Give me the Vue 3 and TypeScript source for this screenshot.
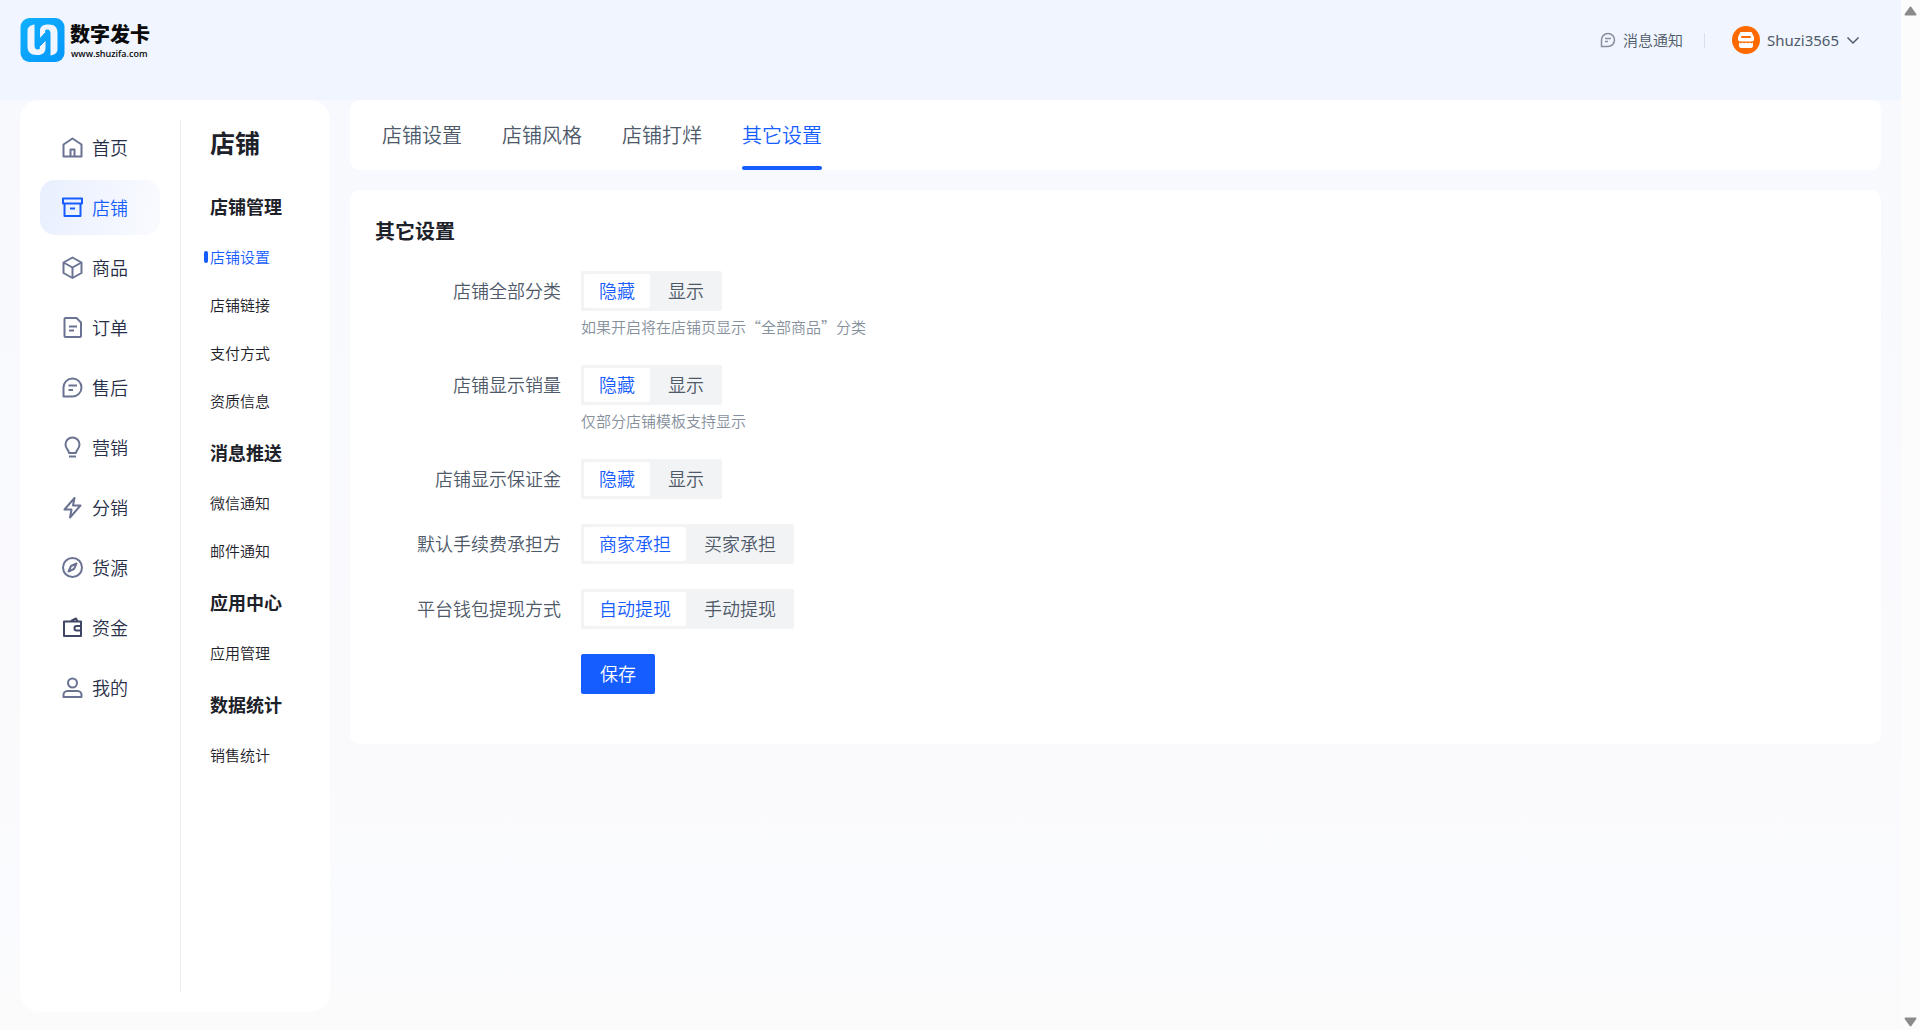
<script setup lang="ts">
import { reactive, ref } from 'vue'

interface MenuItem {
  label: string
  paths: string[]
  dark?: boolean
}

interface Group {
  title: string
  items: string[]
}

interface Field {
  key: string
  label: string
  options: string[]
  hint?: string
}

const menu: MenuItem[] = [
  { label: '首页', paths: ['M3.5 9.5 12.5 3.5l9 6v12h-18z', 'M10.5 21.5v-7h4v7'] },
  { label: '店铺', paths: ['M3 3.5h19v5H3z', 'M4.5 8.5v12.5h16V8.5', 'M10 13.5h5'] },
  { label: '商品', paths: ['M12.5 2.5l9 5v10.5l-9 5-9-5V7.5z', 'M3.5 7.5l9 5 9-5', 'M12.5 12.5V23'] },
  { label: '订单', paths: ['M5.500 3h11l4.500 4.500v13.500a1 1 0 0 1-1 1h-14.500a1 1 0 0 1-1-1v-17a1 1 0 0 1 1-1z', 'M9 11.500h8', 'M9 15.500h5'] },
  { label: '售后', paths: ['M3.500 21.500v-9a9 9 0 1 1 9 9z', 'M8.500 10.500h8.500', 'M8.500 15h4.500'] },
  { label: '营销', paths: ['M9 18c0-3-3.500-4-3.500-8.500a7 7 0 0 1 14 0c0 4.500-3.500 5.500-3.500 8.500z', 'M9 21.500h7'] },
  { label: '分销', paths: ['M14.500 3l-10 11.500h7l-1.500 8 10.500-12h-7.500z'] },
  { label: '货源', paths: ['M12.500 3a9.500 9.500 0 1 1 0 19a9.500 9.500 0 1 1 0-19z', 'M16.500 8.500l-2.500 5.500-5.500 2.500 2.500-5.500z'] },
  { label: '资金', paths: ['M4 6.500h17v14.500h-17z', 'M21 11h-4.500a2 2 0 0 0-2 2v.500a2 2 0 0 0 2 2h4.500', 'M11 6l5-2.500 1.500 3'], dark: true },
  { label: '我的', paths: ['M12.500 3.500a4.500 4.500 0 1 1 0 9a4.500 4.500 0 1 1 0-9z', 'M3.500 22v-2c0-2 1.500-4 4-4h10c2.500 0 4 2 4 4v2z'] },
]

const groups: Group[] = [
  { title: '店铺管理', items: ['店铺设置', '店铺链接', '支付方式', '资质信息'] },
  { title: '消息推送', items: ['微信通知', '邮件通知'] },
  { title: '应用中心', items: ['应用管理'] },
  { title: '数据统计', items: ['销售统计'] },
]

const tabs = ['店铺设置', '店铺风格', '店铺打烊', '其它设置']

const fields: Field[] = [
  { key: 'category', label: '店铺全部分类', options: ['隐藏', '显示'], hint: '如果开启将在店铺页显示“全部商品”分类' },
  { key: 'sales', label: '店铺显示销量', options: ['隐藏', '显示'], hint: '仅部分店铺模板支持显示' },
  { key: 'deposit', label: '店铺显示保证金', options: ['隐藏', '显示'] },
  { key: 'fee', label: '默认手续费承担方', options: ['商家承担', '买家承担'] },
  { key: 'withdraw', label: '平台钱包提现方式', options: ['自动提现', '手动提现'] },
]

const activeMenu = ref('店铺')
const activeSub = ref('店铺设置')
const activeTab = ref('其它设置')
const form = reactive<Record<string, string>>({
  category: '隐藏',
  sales: '隐藏',
  deposit: '隐藏',
  fee: '商家承担',
  withdraw: '自动提现',
})
</script>

<template>
  <div class="shell">
    <div class="page">
      <header class="header">
        <a class="brand" href="#">
          <svg class="brand-mark" viewBox="0 0 44 44" aria-hidden="true">
            <defs>
              <linearGradient id="brand-fill" x1="0" y1="0" x2="1" y2="1">
                <stop offset="0" stop-color="#12b0fd" />
                <stop offset="1" stop-color="#0397fb" />
              </linearGradient>
            </defs>
            <rect width="44" height="44" rx="9" fill="url(#brand-fill)" />
            <path
              d="M7 13c0-4 3-6 7-6.500v20.500c0 3 1 4.500 3 4.500 1.500 0 2.500-.5 2.500-2l-.5-1 6-6v7.500c0 4.500-3 7-8 7h-1c-6 0-9-3-9-8.500z"
              fill="#f0f5ff"
            />
            <path
              d="M37 31c0 4-3 6-7 6.500V16c0-3-1-4.500-3-4.500-1.500 0-2.500.5-2.500 2l.5 1-5.500 6V13c0-4.500 3-6.500 8-6.500h1c6 0 8.500 3 8.500 8.500z"
              fill="#f0f5ff"
            />
            <path d="M19.500 20.500l5.500-6M19 28.500l6-6" stroke="#0aa0fb" stroke-width="1" />
          </svg>
          <span class="brand-text">
            <strong>数字发卡</strong>
            <small>www.shuzifa.com</small>
          </span>
        </a>
        <div class="tools">
          <a class="notice" href="#">
            <svg viewBox="0 0 16 16" class="notice-icon" aria-hidden="true">
              <path d="M1.500 14.500V8A6.500 6.500 0 1 1 8 14.500z" />
              <path d="M5 6.500h6M5 9.500h3" />
            </svg>
            消息通知
          </a>
          <span class="tools-line"></span>
          <button class="user" type="button">
            <svg class="avatar" viewBox="0 0 28 28" aria-hidden="true">
              <circle cx="14" cy="14" r="14" fill="#ff6a00" />
              <path d="M8.500 6h11l2.500 5v2.500a2 2 0 0 1-2 2h-12a2 2 0 0 1-2-2V11z" fill="#fff" />
              <rect x="9" y="10" width="10" height="2" rx="1" fill="#ff6a00" />
              <path d="M7 16.500q1.800 1.500 3.500 0 1.800 1.500 3.500 0 1.800 1.500 3.500 0 1.800 1.500 3.500 0V20a2 2 0 0 1-2 2H9a2 2 0 0 1-2-2z" fill="#fff" />
            </svg>
            <span>Shuzi3565</span>
            <svg class="chevron" viewBox="0 0 14 14" aria-hidden="true"><path d="M1.500 4.500 7 10l5.500-5.500" /></svg>
          </button>
        </div>
      </header>

      <div class="body">
        <aside class="sidebar">
          <nav class="menu">
            <a
              v-for="item in menu"
              :key="item.label"
              href="#"
              class="menu-item"
              :class="{ active: item.label === activeMenu, dark: item.dark }"
              @click.prevent="activeMenu = item.label"
            >
              <svg viewBox="0 0 25 25" aria-hidden="true">
                <path v-for="d in item.paths" :key="d" :d="d" />
              </svg>
              <span>{{ item.label }}</span>
            </a>
          </nav>
          <nav class="submenu">
            <h1>店铺</h1>
            <section v-for="group in groups" :key="group.title">
              <h2>{{ group.title }}</h2>
              <a
                v-for="item in group.items"
                :key="item"
                href="#"
                :class="{ active: item === activeSub }"
                @click.prevent="activeSub = item"
                >{{ item }}</a
              >
            </section>
          </nav>
        </aside>

        <main class="content">
          <nav class="tabs">
            <button
              v-for="tab in tabs"
              :key="tab"
              type="button"
              :class="{ active: tab === activeTab }"
              @click="activeTab = tab"
            >
              {{ tab }}
            </button>
          </nav>
          <form class="panel" @submit.prevent>
            <h2>其它设置</h2>
            <div
              v-for="field in fields"
              :key="field.key"
              class="row"
              role="radiogroup"
              :aria-labelledby="field.key + '-label'"
            >
              <span :id="field.key + '-label'" class="row-label">{{ field.label }}</span>
              <div class="control">
                <div class="segment">
                  <label v-for="option in field.options" :key="option">
                    <input v-model="form[field.key]" type="radio" :name="field.key" :value="option" />
                    <span>{{ option }}</span>
                  </label>
                </div>
                <p v-if="field.hint" class="hint">{{ field.hint }}</p>
              </div>
            </div>
            <div class="row">
              <span class="row-label"></span>
              <button class="save" type="submit">保存</button>
            </div>
          </form>
        </main>
      </div>
    </div>
    <div class="scrollbar" aria-hidden="true">
      <svg viewBox="0 0 13 10"><path d="M6.500 1.500 11.500 8.500h-10z" /></svg>
      <svg viewBox="0 0 13 10"><path d="M1.500 1.500h10L6.500 8.500z" /></svg>
    </div>
  </div>
</template>

<style>
body {
  margin: 0;
}
</style>

<style scoped>
.shell {
  display: flex;
  min-height: 100vh;
  font-family: 'Noto Sans CJK SC', sans-serif;
  font-weight: 350;
  color: #1d2129;
}

.shell *,
.shell *::before {
  box-sizing: border-box;
}

a {
  color: inherit;
  text-decoration: none;
}

button {
  padding: 0;
  border: 0;
  background: none;
  font: inherit;
  color: inherit;
  cursor: pointer;
}

h1,
h2,
p {
  margin: 0;
}

svg {
  display: block;
  flex: none;
}

.page {
  display: flex;
  flex: 1;
  flex-direction: column;
  min-width: 0;
  background: linear-gradient(#f7f9fe, #fafafd 70%, #fafbfe 90%, #fbfbfb);
}

.header {
  display: flex;
  align-items: center;
  justify-content: space-between;
  height: 100px;
  padding: 0 41px 20px 20px;
  background: #f0f5ff;
}

.brand {
  display: flex;
  align-items: center;
  gap: 5px;
  color: #0b0b0b;
}

.brand-mark {
  width: 45px;
  height: 44px;
}

.brand-text {
  display: flex;
  flex-direction: column;
}

.brand-text strong {
  font-size: 20px;
  font-weight: 900;
  line-height: 26px;
}

.brand-text small {
  padding: 1px 0 0 1px;
  font-family: 'Open Sans', sans-serif;
  font-size: 9px;
  font-weight: 600;
  line-height: 12px;
}

.tools {
  display: flex;
  align-items: center;
  font-size: 15px;
  line-height: 24px;
  color: #4e5969;
}

.notice {
  display: flex;
  align-items: center;
  gap: 7px;
}

.notice-icon {
  width: 16px;
  height: 16px;
  fill: none;
  stroke: #86909c;
  stroke-width: 1.5;
}

.tools-line {
  width: 1px;
  height: 15px;
  margin: 0 27px 0 21px;
  background: #dcdfe8;
}

.user {
  display: flex;
  align-items: center;
  gap: 7px;
  font-family: 'Noto Sans', sans-serif;
  font-weight: 400;
}

.avatar {
  width: 28px;
  height: 28px;
}

.chevron {
  width: 14px;
  height: 14px;
  fill: none;
  stroke: #4e5969;
  stroke-width: 1.5;
}

.body {
  display: flex;
  flex: 1;
  gap: 20px;
  padding: 0 20px 18px;
}

.sidebar {
  display: flex;
  flex: none;
  width: 310px;
  padding: 20px 0;
  border-radius: 20px;
  background: #fff;
}

.menu {
  display: flex;
  flex-direction: column;
  gap: 5px;
  width: 161px;
  padding: 0 20px;
  border-right: 1px solid #ececec;
}

.menu-item {
  display: flex;
  align-items: center;
  gap: 7px;
  height: 55px;
  padding-left: 20px;
  border-radius: 15px;
  font-size: 18px;
  color: #272e48;
}

.menu-item span {
  padding-bottom: 2px;
}

.menu-item svg {
  width: 25px;
  height: 25px;
  fill: none;
  stroke: #6b7392;
  stroke-width: 2;
  stroke-linejoin: round;
}

.menu-item.dark svg {
  stroke: #404764;
}

.menu-item.active {
  background: linear-gradient(100deg, #e8effe, #fafbff);
  color: #165dff;
}

.menu-item.active svg {
  stroke: #165dff;
}

.submenu {
  padding-left: 23px;
}

.submenu h1 {
  margin-bottom: 14px;
  padding-left: 6px;
  font-size: 25px;
  font-weight: 700;
  line-height: 45px;
}

.submenu h2 {
  padding-left: 6px;
  font-size: 18px;
  font-weight: 700;
  line-height: 54px;
}

.submenu a {
  display: flex;
  align-items: center;
  gap: 2px;
  font-size: 15px;
  line-height: 48px;
}

.submenu a::before {
  content: '';
  width: 4px;
  height: 12px;
  border-radius: 2px;
}

.submenu a.active {
  color: #165dff;
}

.submenu a.active::before {
  background: #165dff;
}

.content {
  display: flex;
  flex: 1;
  flex-direction: column;
  gap: 20px;
  min-width: 0;
}

.tabs {
  display: flex;
  gap: 40px;
  height: 70px;
  padding: 0 32px;
  border-radius: 10px;
  background: #fff;
  font-size: 20px;
  color: #4e5969;
}

.tabs button {
  display: flex;
  flex-direction: column;
  padding-top: 4px;
  line-height: 62px;
}

.tabs button::after {
  content: '';
  width: 100%;
  height: 4px;
  border-radius: 2px;
}

.tabs button.active {
  color: #165dff;
}

.tabs button.active::after {
  background: #165dff;
}

.panel {
  display: flex;
  flex-direction: column;
  gap: 25px;
  padding: 25px 25px 50px;
  border-radius: 10px;
  background: #fff;
  font-size: 18px;
  color: #4e5969;
}

.panel h2 {
  font-size: 20px;
  font-weight: 700;
  line-height: 31px;
  color: #1d2129;
}

.row {
  display: flex;
  gap: 20px;
}

.row-label {
  width: 186px;
  line-height: 38px;
  text-align: right;
  white-space: nowrap;
}

.segment {
  display: inline-flex;
  gap: 3px;
  height: 40px;
  padding: 3px;
  border-radius: 2px;
  background: #f2f3f5;
  vertical-align: top;
}

.segment label {
  position: relative;
  cursor: pointer;
}

.segment input {
  position: absolute;
  inset: 0;
  margin: 0;
  opacity: 0;
}

.segment span {
  display: block;
  padding: 0 15px 2px;
  border-radius: 2px;
  line-height: 32px;
}

.segment input:checked + span {
  background: #fff;
  color: #165dff;
}

.hint {
  margin: 3px 0 1px;
  font-size: 15px;
  line-height: 25px;
  color: #86909c;
}

.save {
  width: 74px;
  height: 40px;
  padding-bottom: 2px;
  border-radius: 2px;
  background: #165dff;
  color: #fff;
}

.scrollbar {
  display: flex;
  flex: none;
  flex-direction: column;
  align-items: center;
  justify-content: space-between;
  width: 19px;
  padding: 6px 0 3px;
  background: #fcfcfc;
}

.scrollbar svg {
  width: 13px;
  height: 10px;
  fill: #8b8b8b;
  stroke: #8b8b8b;
  stroke-width: 2;
  stroke-linejoin: round;
}
</style>
